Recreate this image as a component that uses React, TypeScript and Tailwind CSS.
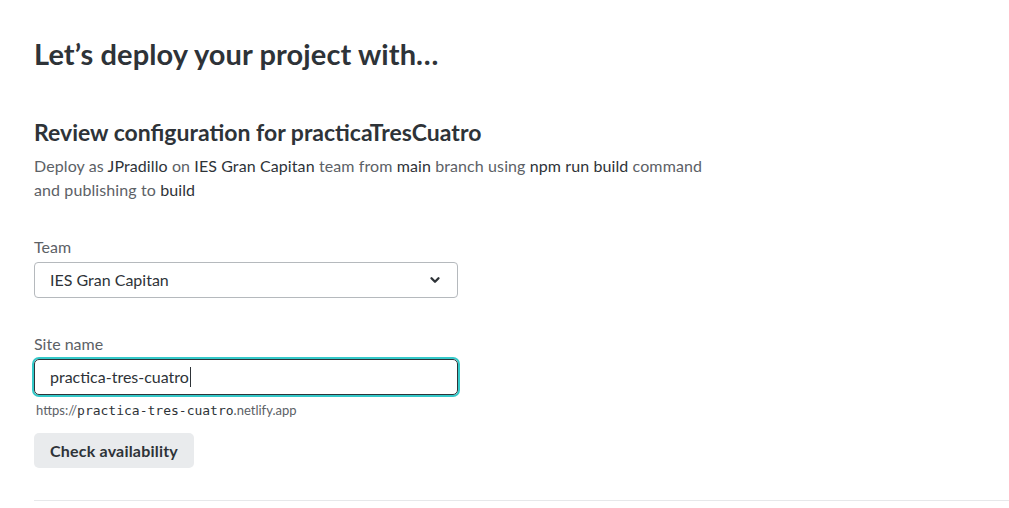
import { ChevronDown } from 'lucide-react';

const font = { fontFamily: 'Lato, "Noto Sans", sans-serif' };

export default function App() {
  return (
    <div className="min-h-[508px] bg-white pl-[34px] pt-[36px] text-[#2e3338]" style={font}>
      <h1 className="text-[29px] font-bold leading-[36px] tracking-[0.1px]">Let’s deploy your project with…</h1>

      <section className="mt-[46px]">
        <h2 className="text-[23px] font-bold leading-[28px]">Review configuration for practicaTresCuatro</h2>
        <p className="mt-[8px] max-w-[690px] text-[16px] leading-[24px] tracking-[0.1px] text-[#5c6166]">
          Deploy as <span className="text-[#2e3338]">JPradillo</span> on <span className="text-[#2e3338]">IES Gran Capitan</span> team from{' '}
          <span className="text-[#2e3338]">main</span> branch using <span className="text-[#2e3338]">npm run build</span> command and publishing to{' '}
          <span className="text-[#2e3338]">build</span>
        </p>

        <div className="mt-[33px] flex w-[424px] flex-col">
          <label className="text-[16px] leading-[24px] text-[#5c6166]">Team</label>
          <div className="mt-[3px] flex h-[36px] items-center justify-between rounded-[4px] border border-[#b5b9bd] px-[15px]">
            <span className="text-[16px]">IES Gran Capitan</span>
            <ChevronDown className="h-[14px] w-[14px]" strokeWidth={4} />
          </div>
        </div>

        <div className="mt-[34px] flex w-[424px] flex-col">
          <label className="text-[16px] leading-[24px] text-[#5c6166]">Site name</label>
          <div className="mt-[3px] flex h-[36px] items-center rounded-[5px] border border-[#2e3338] px-[15px] ring-2 ring-[#34c9c9]">
            <span className="text-[16px]">practica-tres-cuatro</span>
            <span className="ml-[1px] h-[20px] w-[1px] bg-[#2e3338]" />
          </div>
          <div className="mt-[6px] pl-[2px] text-[13px] leading-[18px] text-[#5c6166]">
            https://<span className="text-[#2e3338]" style={{ fontFamily: '"DejaVu Sans Mono", monospace', fontSize: '13px' }}>practica-tres-cuatro</span>.netlify.app
          </div>
        </div>

        <button className="mt-[13px] h-[35px] rounded-[5px] bg-[#e9ebed] px-[16px] text-[16px] font-bold tracking-[0.2px] text-[#2e3338]">
          Check availability
        </button>
      </section>

      <div className="mt-[32px] border-t border-[#e6e8ea]" />
    </div>
  );
}
